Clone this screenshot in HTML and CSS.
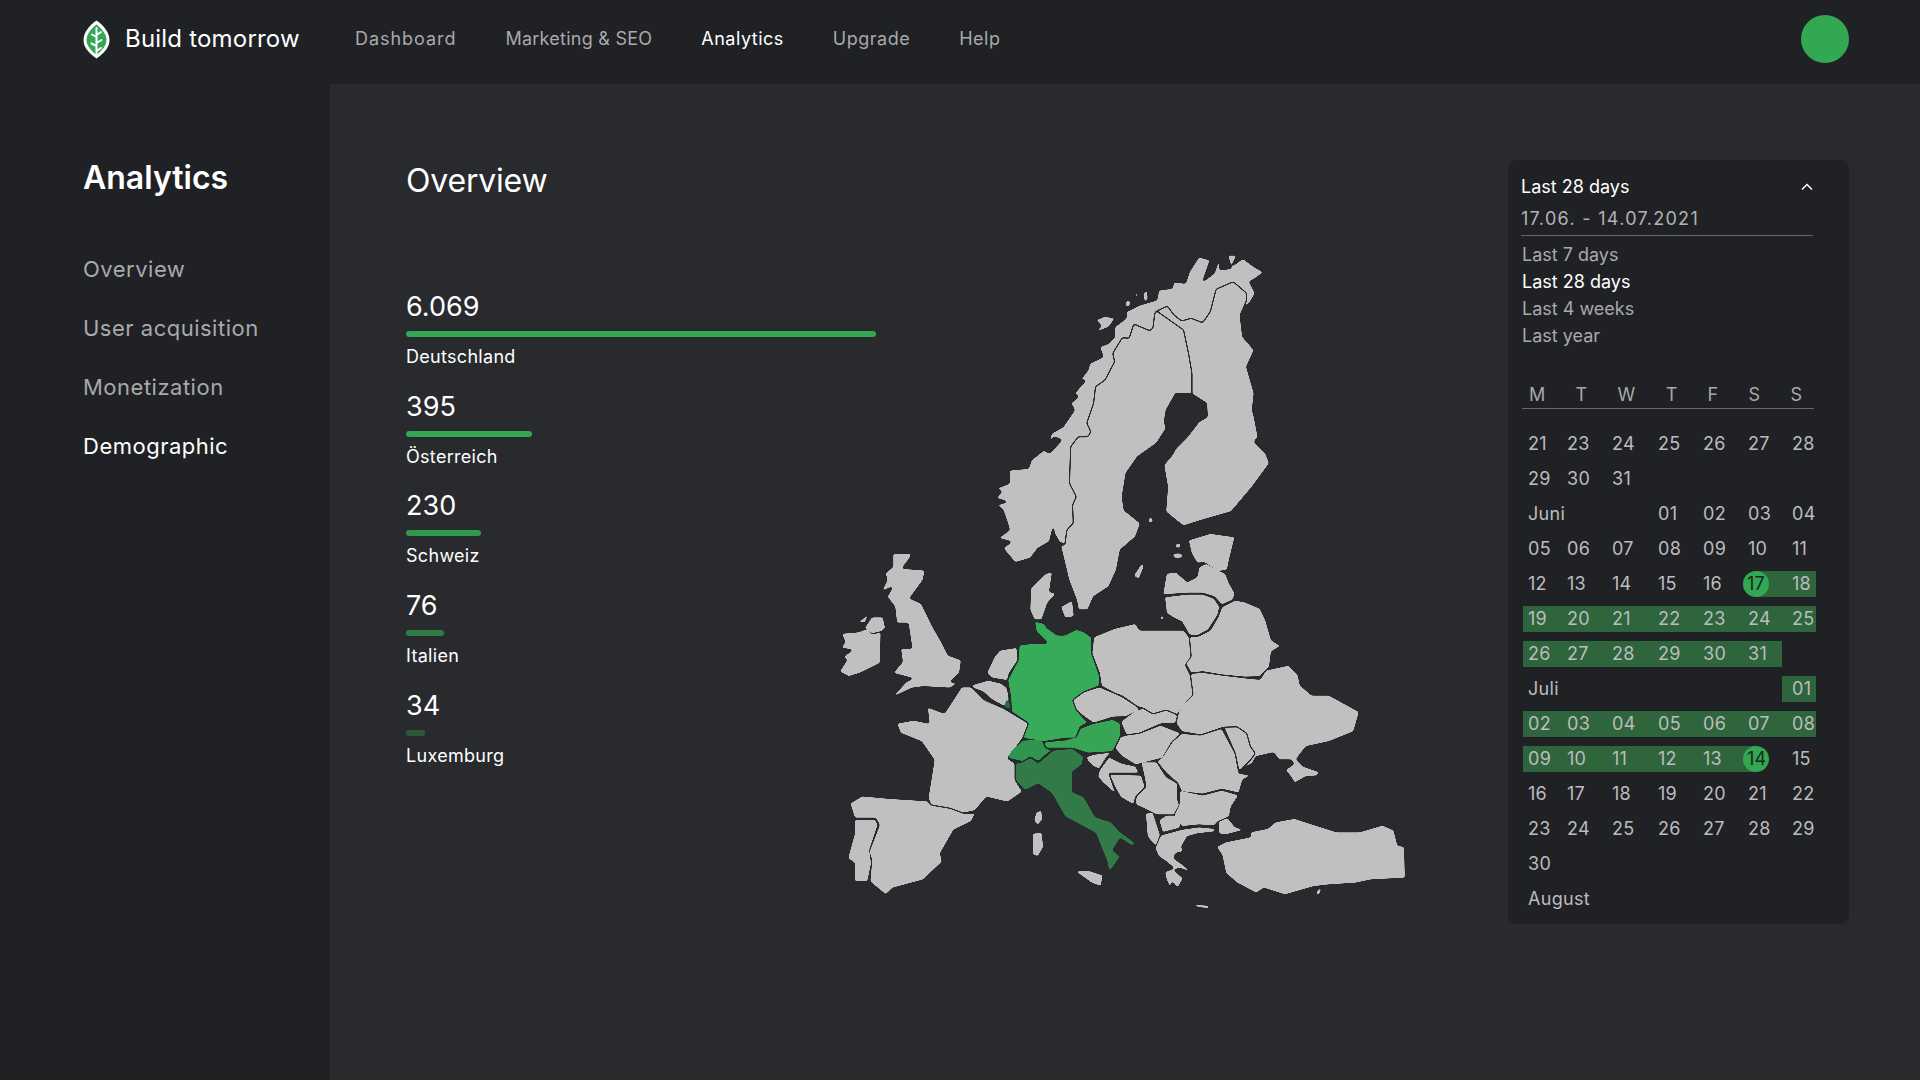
FILE: index.html
```html
<!DOCTYPE html>
<html lang="de">
<head>
    <meta charset="UTF-8">
    <title>Build tomorrow - Analytics</title>
    <link rel="stylesheet" href="styles.css">
</head>
<body>
    <!-- Top bar -->
    <header class="topbar">
        <div class="brand">
            <svg class="brand-logo" viewBox="0 0 27 39">
                <path class="leaf-outer" d="M13.5 0.5C20 5 26.5 12 26.5 20C26.5 28 20 34 13.5 38.5C7 34 0.5 28 0.5 20C0.5 12 7 5 13.5 0.5Z"/>
                <path class="leaf-inner" d="M13.5 4.5C18.5 8.5 23.5 14 23.5 20C23.5 26 18.5 31 13.5 35C8.500 31 3.500 26 3.500 20C3.500 14 8.500 8.500 13.500 4.500Z"/>
                <path class="leaf-vein" d="M13.500 8V34M13.500 15L18 12M13.500 17L9 14.500M13.500 23L18.500 20M13.500 26L8.500 23.500M13.500 31L18 28"/>
            </svg>
            <span class="brand-name">Build tomorrow</span>
        </div>
        <nav class="nav">
            <a class="nav-link">Dashboard</a>
            <a class="nav-link">Marketing &amp; SEO</a>
            <a class="nav-link active">Analytics</a>
            <a class="nav-link">Upgrade</a>
            <a class="nav-link">Help</a>
        </nav>
        <div class="avatar"></div>
    </header>

    <div class="page">
        <!-- Sidebar -->
        <aside class="sidebar">
            <h2 class="sidebar-title">Analytics</h2>
            <ul class="side-list">
                <li class="side-item">Overview</li>
                <li class="side-item">User acquisition</li>
                <li class="side-item">Monetization</li>
                <li class="side-item active">Demographic</li>
            </ul>
        </aside>

        <main class="content">
            <!-- Overview numbers -->
            <section class="overview">
                <h1 class="overview-title">Overview</h1>
                <div class="stat">
                    <div class="stat-value">6.069</div>
                    <div class="stat-bar" style="width: 470px; background: #33a852;"></div>
                    <div class="stat-label">Deutschland</div>
                </div>
                <div class="stat">
                    <div class="stat-value">395</div>
                    <div class="stat-bar" style="width: 126px; background: #33a852;"></div>
                    <div class="stat-label">Österreich</div>
                </div>
                <div class="stat">
                    <div class="stat-value">230</div>
                    <div class="stat-bar" style="width: 75px; background: #2f994e;"></div>
                    <div class="stat-label">Schweiz</div>
                </div>
                <div class="stat">
                    <div class="stat-value">76</div>
                    <div class="stat-bar" style="width: 38px; background: #2e7d47;"></div>
                    <div class="stat-label">Italien</div>
                </div>
                <div class="stat">
                    <div class="stat-value">34</div>
                    <div class="stat-bar" style="width: 19px; background: #2a5a3a;"></div>
                    <div class="stat-label">Luxemburg</div>
                </div>
            </section>

            <!-- Europe map -->
            <svg class="map" viewBox="0 0 1568 2040" preserveAspectRatio="none">
                <defs>
                    <!-- rounds the polygon corners and leaves a thin gap between countries -->
                    <filter id="soften" x="-20%" y="-20%" width="140%" height="140%" color-interpolation-filters="sRGB">
                        <feGaussianBlur stdDeviation="2.2 2.5"/>
                        <feComponentTransfer>
                            <feFuncA type="linear" slope="10" intercept="-6.5"/>
                        </feComponentTransfer>
                    </filter>
                </defs>
                <g class="land">
                    <!-- Norway -->
                    <path d="M1160 97L1135 118L1122 125L1138 160L1125 185L1105 208L1115 180L1115 160L1080 125L1035 148L1020 215L1000 248L970 235L945 243L925 225L908 198L880 213L875 218L870 265L862 272L820 252L808 295L790 293L765 340L770 365L745 420L720 440L715 490L697 550L708 575L700 590L675 590L655 620L652 730L670 770L660 795L662 850L645 870L640 915L625 905L612 880L610 858L600 905L570 925L550 955L510 968L478 925L500 905L465 895L495 870L490 850L478 810L462 795L490 785L460 775L475 755L462 745L495 730L495 690L545 685L552 660L585 630L600 640L632 600L612 590L595 612L605 580L635 560L665 510L655 490L675 470L665 460L695 420L680 420L700 390L705 370L740 350L730 320L755 310L770 290L770 260L800 235L800 215L835 195L880 180L885 150L920 145L925 125L955 130L965 95L990 50L1020 60L1000 125L1030 100L1045 50L1045 90L1075 85L1065 45L1090 45L1075 80L1105 55L1135 80Z"/>
                    <path d="M720 240L745 228L772 235L755 262L715 280L735 258Z"/>
                    <path d="M797 185L810 178L812 195L800 205Z"/>
                    <path d="M825 158L832 152L830 172L822 172Z"/>
                    <path d="M843 160L856 150L858 178L848 188Z"/>
                    <path d="M872 143L872 175L862 195Z"/>
                    <!-- Sweden -->
                    <path d="M880 213L950 270L963 340L972 400L972 462L930 460L905 510L900 545L905 565L880 610L830 650L800 700L790 770L795 810L838 850L825 890L785 930L775 990L755 1040L715 1070L700 1110L675 1110L670 1080L650 1020L628 915L640 915L645 870L662 850L660 795L670 770L652 730L655 620L675 590L700 590L708 575L697 550L715 490L720 440L745 420L770 365L765 340L790 293L808 295L820 252L862 272L870 265L875 218Z"/>
                    <!-- Finland -->
                    <path d="M972 462L1010 490L1012 530L990 545L960 590L930 625L920 645L898 675L908 740L903 815L935 845L950 858L1000 840L1075 815L1130 740L1175 670L1165 640L1135 605L1145 590L1135 530L1130 510L1135 460L1115 380L1135 330L1105 290L1098 225L1105 208L1115 180L1115 160L1080 125L1035 148L1020 215L1000 248L970 235L945 243L925 225L908 198L880 213L950 270L963 340L972 400Z"/>
                    <!-- Estonia and Baltic islands -->
                    <path d="M962 900L1020 880L1085 890L1070 960L1065 990L1040 995L1005 968L985 970L970 940Z"/>
                    <ellipse cx="936" cy="917" rx="8" ry="8"/>
                    <ellipse cx="864" cy="841" rx="7" ry="9"/>
                    <ellipse cx="935" cy="947" rx="14" ry="9"/>
                    <path d="M840 970L848 978L834 1018L818 1008Z"/>
                </g>
                <g class="land" transform="translate(0 960)">
                    <!-- Great Britain and Ireland -->
                    <path d="M190 -20L240 -20L235 -5L215 25L275 30L270 60L235 115L265 130L295 200L320 250L335 285L370 300L365 340L340 365L360 370L340 385L270 380L240 385L185 415L225 365L260 345L240 355L190 340L215 305L210 265L240 265L230 190L200 190L195 140L175 110L190 80L160 95L175 60L170 40L190 20Z"/>
                    <path d="M55 220L100 215L125 205L135 222L160 215L158 310L105 340L75 350L50 335L70 300L60 290L85 270L55 265L65 245Z"/>
                    <path d="M115 205L135 170L165 170L172 205L160 215L135 222Z"/>
                    <path d="M96 190L130 158L118 188Z"/>
                    <!-- France -->
                    <path d="M200 490L245 480L285 490L280 440L325 460L370 380L395 380L430 420L480 445L545 490L530 535L490 595L510 610L510 660L530 695L490 727L435 712L405 752L375 760L340 745L290 735L282 715L298 600L265 545L210 520Z"/>
                    <path d="M565 755L580 750L582 780L568 797L558 780Z"/>
                    <!-- Spain, Portugal -->
                    <path d="M78 730L110 707L180 715L282 722L290 735L340 745L375 760L407 760L395 785L350 810L315 880L320 905L270 960L190 985L172 1005L130 965L135 900L128 875L155 795L145 775L90 775Z"/>
                    <path d="M90 778L145 778L152 795L130 870L135 910L125 965L90 965L90 910L72 895L90 820Z"/>
                    <!-- Benelux -->
                    <path d="M395 375L440 360L475 370L490 385L495 420L482 440L450 420L425 395L400 385Z"/>
                    <path d="M435 340L455 290L470 270L515 262L518 300L495 340L490 362L450 355Z"/>
                    <!-- Denmark -->
                    <path d="M560 180L548 150L550 85L590 40L608 35L600 95L618 100L595 130L580 180Z"/>
                    <path d="M628 140L660 120L665 170L640 175Z"/>
                    <path d="M722 162L734 170L728 178Z"/>
                    <!-- Baltics, Belarus, Poland -->
                    <path d="M895 105L905 40L930 35L960 65L985 50L990 20L1010 10L1040 30L1060 40L1070 70L1085 100L1080 120L1050 135L1030 110L1000 100L960 100Z"/>
                    <path d="M900 110L960 102L1000 102L1030 115L1045 140L1040 165L1015 210L985 228L965 225L945 185L925 175L905 160Z"/>
                    <path d="M883 178L897 163L900 179Z"/>
                    <path d="M1050 140L1085 120L1110 125L1150 145L1165 180L1180 240L1205 258L1180 275L1175 320L1150 350L1110 352L1050 345L1000 335L970 340L955 310L970 290L965 230L990 228L1020 210L1040 170Z"/>
                    <path d="M715 230L770 205L825 190L835 210L950 210L965 230L970 290L955 315L968 345L975 405L945 440L935 465L905 450L870 462L845 445L830 440L790 408L770 400L735 378L730 340L710 280Z"/>
                    <!-- Ukraine, Moldova, Romania -->
                    <path d="M970 340L1000 337L1050 345L1110 353L1150 358L1165 330L1225 315L1250 345L1255 375L1285 405L1330 405L1410 455L1395 515L1330 545L1270 560L1245 598L1262 618L1305 635L1300 648L1270 650L1240 670L1230 650L1215 630L1238 612L1232 600L1200 600L1185 578L1140 590L1130 610L1095 635L1125 600L1138 580L1125 560L1115 520L1090 500L1055 502L995 525L945 515L930 490L940 440L975 405L968 345Z"/>
                    <path d="M1055 502L1090 500L1115 520L1125 560L1138 580L1125 600L1095 635L1085 580Z"/>
                    <path d="M945 520L995 525L1050 505L1085 580L1095 640L1128 645L1105 660L1095 700L1050 688L1000 703L945 695L935 670L905 640L880 605L895 590L920 545Z"/>
                    <!-- Central Europe -->
                    <path d="M660 420L690 395L730 380L770 400L790 410L830 440L835 450L800 470L765 472L715 490L690 470L670 450Z"/>
                    <path d="M785 485L825 450L845 445L870 462L905 450L935 465L930 490L890 492L835 520L800 525Z"/>
                    <path d="M785 530L800 525L835 520L890 495L945 520L920 545L895 595L825 615L790 590L770 565Z"/>
                    <!-- Balkans -->
                    <path d="M695 590L715 583L765 575L750 590L730 628L715 620L700 605Z"/>
                    <path d="M730 630L755 590L790 610L825 618L835 640L755 640L770 690L785 715L740 670L725 650Z"/>
                    <path d="M755 642L840 645L850 680L825 710L820 735L785 712L770 680Z"/>
                    <path d="M838 605L880 605L905 650L935 670L935 720L940 735L925 765L880 765L845 745L825 735L825 712L852 680L845 640Z"/>
                    <path d="M850 760L870 755L880 790L890 825L878 860L855 830Z"/>
                    <path d="M885 780L905 765L930 765L945 785L940 805L895 818Z"/>
                    <path d="M940 690L1000 705L1050 690L1095 705L1075 740L1070 770L1040 785L1030 798L990 795L945 800L925 765L938 735Z"/>
                    <path d="M890 825L945 808L990 800L1030 805L1035 815L985 822L960 830L945 860L950 875L930 880L925 895L950 915L975 940L940 925L925 930L950 955L935 985L920 965L915 985L905 960L900 935L925 925L905 905L885 890L875 865Z"/>
                    <path d="M968 1031L1017 1036L1017 1047L985 1042Z"/>
                    <!-- Turkey -->
                    <path d="M1040 785L1065 772L1085 800L1110 810L1060 825L1042 822Z"/>
                    <path d="M1125 815L1170 805L1190 785L1240 775L1280 790L1350 815L1410 815L1470 795L1500 810L1510 855L1528 860L1530 955L1440 960L1400 970L1330 975L1290 980L1215 1005L1160 985L1140 1000L1115 985L1090 970L1060 940L1050 885L1035 860L1060 845L1125 830Z"/>
                    <path d="M1305 983L1312 990L1300 1012L1296 995Z"/>
                    <!-- Italian islands -->
                    <path d="M665 933L700 930L740 945L735 980L710 970Z"/>
                    <path d="M555 820L580 815L585 860L570 890L555 885Z"/>
                </g>
                <g transform="translate(0 960)">
                    <!-- Countries with visits -->
                    <path class="de" d="M560 183L585 190L595 205L620 225L640 225L670 208L690 215L710 232L710 280L730 345L730 378L690 395L660 420L670 450L700 488L680 500L668 535L640 535L585 545L530 535L545 490L500 455L498 410L490 360L518 300L520 255L555 250L595 250L565 215Z"/>
                    <path class="at" d="M585 545L640 540L670 530L680 505L715 490L765 478L785 490L785 530L765 575L700 580L660 565L605 565L590 565Z"/>
                    <path class="lu" d="M485 416L496 423L499 450L481 442Z"/>
                    <path class="ch" d="M490 595L500 570L530 540L580 537L590 565L608 570L590 585L570 605L550 590L530 605L510 600Z"/>
                    <path class="it" d="M510 610L530 605L550 592L570 608L610 570L660 565L690 590L685 615L660 635L660 695L690 710L720 770L760 785L785 815L825 850L815 858L785 835L765 870L785 890L770 915L755 937L750 905L720 820L680 795L640 770L605 700L570 672L535 692L510 660Z"/>
                </g>
            </svg>

            <!-- Date range picker -->
            <section class="picker">
                <div class="picker-head">
                    <div class="picker-range">
                        <span>Last 28 days</span>
                        <svg class="chevron" viewBox="0 0 12 8"><path d="M1 6.500L6 1.500L11 6.500"/></svg>
                    </div>
                    <div class="picker-dates">17.06. - 14.07.2021</div>
                </div>
                <ul class="range-list">
                    <li>Last 7 days</li>
                    <li class="active">Last 28 days</li>
                    <li>Last 4 weeks</li>
                    <li>Last year</li>
                </ul>
                <div class="weekdays">
                    <span>M</span><span>T</span><span>W</span><span>T</span><span>F</span><span>S</span><span>S</span>
                </div>
                <div class="calendar">
                    <span>21</span><span>23</span><span>24</span><span>25</span><span>26</span><span>27</span><span class="sun">28</span>
                    <span>29</span><span>30</span><span>31</span>
                    <span class="month month-3">Juni</span><span>01</span><span>02</span><span>03</span><span class="sun">04</span>
                    <span>05</span><span>06</span><span>07</span><span>08</span><span>09</span><span>10</span><span class="sun">11</span>
                    <span>12</span><span>13</span><span>14</span><span>15</span><span>16</span><span class="start"><b>17</b></span><span class="sel sun">18</span>
                    <span class="sel">19</span><span class="sel">20</span><span class="sel">21</span><span class="sel">22</span><span class="sel">23</span><span class="sel">24</span><span class="sel sun">25</span>
                    <span class="sel">26</span><span class="sel">27</span><span class="sel">28</span><span class="sel">29</span><span class="sel">30</span><span class="sel">31</span>
                    <span class="month month-6">Juli</span><span class="sel sun">01</span>
                    <span class="sel">02</span><span class="sel">03</span><span class="sel">04</span><span class="sel">05</span><span class="sel">06</span><span class="sel">07</span><span class="sel sun">08</span>
                    <span class="sel">09</span><span class="sel">10</span><span class="sel">11</span><span class="sel">12</span><span class="sel">13</span><span class="end"><b>14</b></span><span class="sun">15</span>
                    <span>16</span><span>17</span><span>18</span><span>19</span><span>20</span><span>21</span><span class="sun">22</span>
                    <span>23</span><span>24</span><span>25</span><span>26</span><span>27</span><span>28</span><span class="sun">29</span>
                    <span>30</span>
                    <span class="month month-7">August</span>
                </div>
            </section>
        </main>
    </div>
</body>
</html>
```

FILE: styles.css
```css
* {
    box-sizing: border-box;
}

html, body {
    margin: 0;
    padding: 0;
    height: 100%;
    overflow: hidden;
}

body {
    display: flex;
    flex-direction: column;
    background: #282a2e;
    color: #ffffff;
    font-family: "Inter", "Noto Sans", sans-serif;
}

/* Top bar */
.topbar {
    height: 84px;
    flex-shrink: 0;
    display: flex;
    align-items: center;
    padding: 0 71px 6px 83px;
    background: #202125;
}

.brand {
    display: flex;
    align-items: center;
    gap: 15px;
    width: 272px;
}

.brand-logo {
    width: 27px;
    height: 39px;
}

.leaf-outer {
    fill: #ffffff;
}

.leaf-inner {
    fill: #33a852;
}

.leaf-vein {
    fill: none;
    stroke: #ffffff;
    stroke-width: 2;
    stroke-linecap: round;
}

.brand-name {
    margin-bottom: 1px;
    font-size: 24px;
    letter-spacing: 0.2px;
    color: #ffffff;
}

.nav {
    display: flex;
    gap: 49px;
    flex: 1;
    margin-bottom: 2px;
}

.nav-link {
    font-size: 18px;
    letter-spacing: 0.5px;
    color: #a9a9ab;
}

.nav-link:first-child {
    letter-spacing: 0.95px;
}

.nav-link:nth-child(2) {
    letter-spacing: 0.25px;
}

.nav-link.active {
    color: #ffffff;
}

.avatar {
    width: 48px;
    height: 48px;
    border-radius: 50%;
    background: #33a852;
}

/* Page */
.page {
    flex: 1;
    display: flex;
    min-height: 0;
}

.sidebar {
    width: 330px;
    flex-shrink: 0;
    padding: 74px 0 0 83px;
    background: #202125;
}

.sidebar-title {
    margin: 0 0 42px;
    font-size: 32px;
    line-height: 40px;
    font-weight: 600;
}

.side-list {
    list-style: none;
    margin: 0;
    padding: 0;
}

.side-item {
    height: 59px;
    line-height: 59px;
    font-size: 22px;
    letter-spacing: 0.5px;
    color: #a9a9ab;
}

.side-item.active {
    color: #ffffff;
}

.content {
    flex: 1;
    display: flex;
    align-items: flex-start;
    padding: 76px 0 0 76px;
}

/* Overview numbers */
.overview {
    width: 414px;
    flex-shrink: 0;
}

.overview-title {
    margin: 0 0 87px;
    font-size: 32px;
    line-height: 42px;
    font-weight: 400;
    letter-spacing: -0.2px;
}

.stat {
    margin-bottom: 19.7px;
}

.stat-value {
    font-size: 27px;
    line-height: 36px;
}

.stat-bar {
    height: 6px;
    margin: 6px 0 8px;
    border-radius: 3px;
}

.stat-label {
    font-size: 18px;
    line-height: 24px;
    letter-spacing: 0.3px;
}

/* Map */
.map {
    width: 600px;
    height: 680px;
    flex-shrink: 0;
    margin-top: 80px;
}

.map path, .map ellipse {
    filter: url(#soften);
}

.land {
    fill: #c0c0c0;
}

.de { fill: #36ab58; }
.at { fill: #38a556; }
.ch { fill: #2f9550; }
.it { fill: #337a49; }
.lu { fill: #2a6a42; }

/* Date picker */
.picker {
    width: 341px;
    flex-shrink: 0;
    margin-left: 88px;
    padding: 15px 13px 12px;
    border-radius: 8px;
    background: #202125;
}

.picker-head {
    width: 292px;
    padding-bottom: 4px;
    border-bottom: 1px solid #66676a;
}

.picker-range {
    display: flex;
    justify-content: space-between;
    align-items: center;
    font-size: 18px;
    line-height: 24px;
}

.chevron {
    width: 12px;
    height: 8px;
    fill: none;
    stroke: #ffffff;
    stroke-width: 1.5;
}

.picker-dates {
    margin-top: 8px;
    font-size: 18px;
    line-height: 24px;
    letter-spacing: 1.3px;
    color: #b3b3b5;
}

.range-list {
    list-style: none;
    margin: 5px 0 0;
    padding: 0 0 0 1px;
}

.range-list li {
    height: 27px;
    line-height: 27px;
    font-size: 18px;
    color: #a9a9ab;
}

.range-list li.active {
    color: #ffffff;
}

.weekdays {
    display: flex;
    justify-content: space-between;
    width: 292px;
    margin: 34px 0 0 1px;
    padding: 0 12px 1px 7px;
    border-bottom: 1px solid #66676a;
    font-size: 18px;
    line-height: 24px;
    color: #a9a9ab;
}

.calendar {
    display: grid;
    grid-template-columns: 39px 45px 46px 45px 45px 39px 34px;
    grid-auto-rows: 26px;
    row-gap: 9px;
    margin: 22px 0 0 2px;
    font-size: 18px;
    line-height: 26px;
    letter-spacing: 0.3px;
    color: #bcbcbe;
}

.calendar span {
    padding-left: 5px;
}

.calendar span.sun {
    padding-left: 10px;
}

.calendar b {
    display: block;
    width: 26px;
    height: 26px;
    margin-left: -5px;
    padding-left: 4px;
    border-radius: 50%;
    background: #33a852;
    color: #17291d;
    font-weight: 400;
}

.sel {
    background: #2e653c;
}

.start {
    background: linear-gradient(to right, transparent 13px, #2e653c 13px);
}

.end {
    background: linear-gradient(to right, #2e653c 13px, transparent 13px);
}

.month {
    grid-column-start: 1;
}

.month-3 { grid-column-end: span 3; }
.month-6 { grid-column-end: span 6; }
.month-7 { grid-column-end: span 7; }
```
